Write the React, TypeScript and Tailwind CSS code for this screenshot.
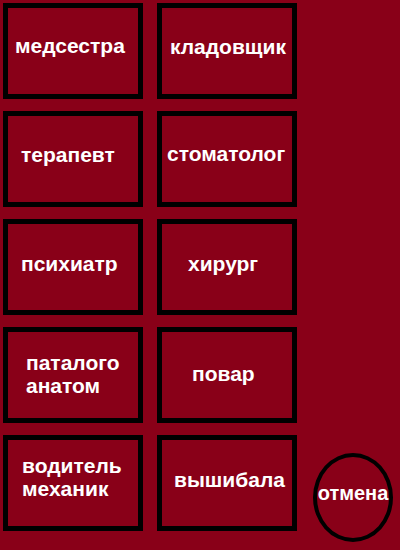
import React from "react";

type Item = { lines: string[]; pt: string; pl: string };

const col1: Item[] = [
  { lines: ["медсестра"], pt: "pt-[26px]", pl: "pl-[7px]" },
  { lines: ["терапевт"], pt: "pt-[27px]", pl: "pl-[13px]" },
  { lines: ["психиатр"], pt: "pt-[28px]", pl: "pl-[13px]" },
  { lines: ["паталого", "анатом"], pt: "pt-[19px]", pl: "pl-[18px]" },
  { lines: ["водитель", "механик"], pt: "pt-[14px]", pl: "pl-[14px]" },
];

const col2: Item[] = [
  { lines: ["кладовщик"], pt: "pt-[27px]", pl: "pl-[8px]" },
  { lines: ["стоматолог"], pt: "pt-[26px]", pl: "pl-[5px]" },
  { lines: ["хирург"], pt: "pt-[28px]", pl: "pl-[26px]" },
  { lines: ["повар"], pt: "pt-[30px]", pl: "pl-[30px]" },
  { lines: ["вышибала"], pt: "pt-[28px]", pl: "pl-[12px]" },
];

function Box({ item }: { item: Item }) {
  return (
    <div
      className={`h-[96px] w-[140px] border-[5px] border-black ${item.pt} ${item.pl} text-white font-bold text-[21px] leading-[23px] whitespace-nowrap`}
    >
      {item.lines.map((l) => (
        <div key={l}>{l}</div>
      ))}
    </div>
  );
}

export default function App() {
  return (
    <div
      className="w-[400px] h-[550px] bg-[#890018] flex"
      style={{ fontFamily: '"Liberation Sans", Arial, sans-serif' }}
    >
      <div className="flex flex-col gap-[12px] pt-[3px] pl-[3px]">
        {col1.map((it) => (
          <Box key={it.lines[0]} item={it} />
        ))}
      </div>
      <div className="flex flex-col gap-[12px] pt-[3px] pl-[14px]">
        {col2.map((it) => (
          <Box key={it.lines[0]} item={it} />
        ))}
      </div>
      <div className="flex flex-col justify-end pb-[8px] pl-[16px]">
        <div className="w-[80px] h-[89px] rounded-[50%] border-[4px] border-black flex items-center justify-center pb-[8px] text-white font-bold text-[20px] leading-[23px] whitespace-nowrap">
          отмена
        </div>
      </div>
    </div>
  );
}
